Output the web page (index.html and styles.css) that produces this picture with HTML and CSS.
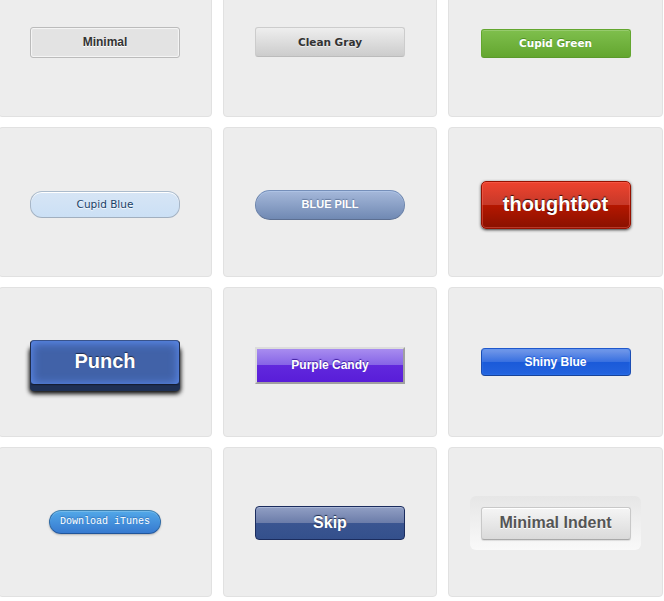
FILE: index.html
```html
<!DOCTYPE html>
<html>
<head>
<meta charset="utf-8">
<title>CSS3 Buttons</title>
<link rel="stylesheet" href="styles.css">
</head>
<body>
<ul class="grid">
  <li class="cell"><button class="btn minimal">Minimal</button></li>
  <li class="cell"><button class="btn clean-gray">Clean Gray</button></li>
  <li class="cell"><button class="btn cupid-green">Cupid Green</button></li>
  <li class="cell cell-low"><button class="btn cupid-blue">Cupid Blue</button></li>
  <li class="cell cell-low"><button class="btn blue-pill">Blue Pill</button></li>
  <li class="cell cell-low"><button class="btn thoughtbot">thoughtbot</button></li>
  <li class="cell"><button class="btn punch">Punch</button></li>
  <li class="cell"><button class="btn purple-candy">Purple Candy</button></li>
  <li class="cell"><button class="btn shiny-blue">Shiny Blue</button></li>
  <li class="cell"><button class="btn download-itunes">Download iTunes</button></li>
  <li class="cell"><button class="btn skip">Skip</button></li>
  <li class="cell"><div class="indent-wrap"><button class="btn minimal-indent">Minimal Indent</button></div></li>
</ul>
</body>
</html>
```
FILE: styles.css
```css
html, body {
  margin: 0;
  padding: 0;
  background: #fff;
  overflow: hidden;
}

.grid {
  list-style: none;
  margin: -33px 0 0 -2px;
  padding: 0;
  display: grid;
  grid-template-columns: 214px 214px 215px;
  grid-auto-rows: 150px;
  column-gap: 11px;
  row-gap: 10px;
}

.cell {
  box-sizing: border-box;
  background: #ededed;
  border: 1px solid #e1e1e1;
  border-radius: 4px;
  display: flex;
  align-items: center;
  justify-content: center;
}

.cell-low {
  padding-top: 5px;
}

.btn {
  box-sizing: border-box;
  width: 150px;
  margin: 0;
  padding: 0;
  display: flex;
  align-items: center;
  justify-content: center;
  text-align: center;
  cursor: pointer;
  font-family: "Liberation Sans", Arial, sans-serif;
  line-height: 1;
}

.minimal {
  height: 31px;
  background: #e3e3e3;
  border: 1px solid #bbb;
  border-radius: 3px;
  box-shadow: inset 0 0 1px 1px #f6f6f6;
  color: #333;
  font-weight: bold;
  font-size: 12px;
  text-shadow: 0 1px 0 #fff;
}

.clean-gray {
  height: 30px;
  background: linear-gradient(#eeeeee, #cccccc);
  border: 1px solid #ccc;
  border-bottom-color: #bbb;
  border-radius: 3px;
  color: #333;
  font-family: "DejaVu Sans", Verdana, sans-serif;
  font-weight: bold;
  font-size: 10.5px;
  text-shadow: 0 1px 0 #eee;
}

.cupid-green {
  height: 29px;
  margin-top: 2px;
  background: linear-gradient(#7fbf4d, #63a62f);
  border: 1px solid #63a62f;
  border-bottom-color: #5b992b;
  border-radius: 3px;
  box-shadow: inset 0 1px 0 0 #96ca6d;
  color: #fff;
  font-family: "DejaVu Sans", Verdana, sans-serif;
  font-weight: bold;
  font-size: 10.5px;
  text-shadow: 0 -1px 0 #4c9021;
}

.cupid-blue {
  height: 27px;
  background: linear-gradient(#d7e5f5, #cbe0f5);
  border: 1px solid #a7b6c7;
  border-top-color: #abbbcc;
  border-bottom-color: #a1afbf;
  border-radius: 12px;
  box-shadow: inset 0 1px 0 0 #fff;
  color: #1a3e66;
  font-family: "DejaVu Sans", Verdana, sans-serif;
  font-size: 10.5px;
  text-shadow: 0 1px 1px #fff;
}

.blue-pill {
  height: 30px;
  background: linear-gradient(#a5b8da, #7089b3);
  border: 1px solid #6c84ab;
  border-top-color: #758fba;
  border-bottom-color: #5c6f91;
  border-radius: 18px;
  box-shadow: inset 0 1px 0 0 #aec3e5;
  color: #fff;
  font-weight: bold;
  font-size: 11px;
  text-shadow: 0 -1px 1px #64799e;
  text-transform: uppercase;
}

.thoughtbot {
  height: 48px;
  background: linear-gradient(#ee432e 0%, #c63929 50%, #b51700 50%, #891100 100%);
  border: 1px solid #951100;
  border-radius: 5px;
  box-shadow: inset 0 0 0 1px rgba(255, 115, 100, 0.4), 0 1px 3px #333;
  color: #fff;
  font-weight: bold;
  font-size: 20px;
  text-shadow: 0 -1px 1px rgba(0, 0, 0, 0.8);
  padding-bottom: 2px;
}

.punch {
  height: 45px;
  background: #4162a8;
  border: 1px solid #1f2d4d;
  border-top-color: #38538c;
  border-bottom-color: #151e33;
  border-radius: 4px;
  box-shadow: inset 0 1px 10px 1px #5c8bee, 0 1px 0 #1d2c4d, 0 6px 0 #1f3053, 0 8px 4px 1px #111;
  color: #fff;
  font-weight: bold;
  font-size: 20px;
  text-shadow: 0 -1px 1px #1e2d4d;
  padding-bottom: 3px;
}

.purple-candy {
  height: 37px;
  margin-top: 6px;
  background: linear-gradient(#a88cf0 0%, #8563e6 50%, #6128dd 50%, #591dd8 100%);
  border: 2px solid #a0a0a0;
  border-top-color: #dcdcdc;
  border-left-color: #dcdcdc;
  color: #fff;
  font-weight: bold;
  font-size: 12px;
  text-shadow: 0 -1px 1px #3d1a9e;
}

.shiny-blue {
  height: 28px;
  background: linear-gradient(#759ae9 0%, #376fe0 50%, #1a5ad9 50%, #2463de 100%);
  border: 1px solid #1b4db3;
  border-top-color: #1f58cc;
  border-bottom-color: #174299;
  border-radius: 4px;
  box-shadow: inset 0 0 2px 0 rgba(57, 140, 255, 0.8);
  color: #fff;
  font-weight: bold;
  font-size: 12px;
  text-shadow: 0 -1px 1px #1a5ad9;
}

.download-itunes {
  width: 112px;
  height: 24px;
  background: linear-gradient(#52a8e8, #377ad0);
  border: 1px solid #2e69a3;
  border-top-color: #4081af;
  border-bottom-color: #20559a;
  border-radius: 16px;
  box-shadow: inset 0 1px 0 0 #72b9eb, 0 1px 2px 0 #b3b3b3;
  color: #fff;
  font-family: "Liberation Mono", "Courier New", monospace;
  font-size: 10px;
  text-shadow: 0 -1px 1px #3275bc;
}

.skip {
  height: 34px;
  margin-top: 2px;
  background: linear-gradient(#919fc4 0%, #6b7ca9 50%, #3a5591 50%, #34508c 100%);
  border: 1px solid #1b2c5e;
  border-radius: 4px;
  box-shadow: inset 0 1px 0 0 #a9b6d6;
  color: #fff;
  font-weight: bold;
  font-size: 16px;
  text-shadow: 0 -1px 1px #1e2d4d;
}

.indent-wrap {
  box-sizing: border-box;
  width: 171px;
  height: 54px;
  margin-top: 2px;
  padding: 11px 10px;
  background: linear-gradient(#e6e6e6, #f9f9f9);
  border-radius: 6px;
  display: flex;
  align-items: center;
  justify-content: center;
}

.minimal-indent {
  height: 33px;
  background: linear-gradient(#f5f5f5, #dadada);
  border: 1px solid #c8c8c8;
  border-bottom-color: #a9a9a9;
  border-radius: 3px;
  box-shadow: inset 0 1px 0 0 #fff, 0 1px 1px rgba(0, 0, 0, 0.1);
  color: #555;
  font-weight: bold;
  font-size: 16px;
  text-shadow: 0 1px 0 #fff;
}
```
